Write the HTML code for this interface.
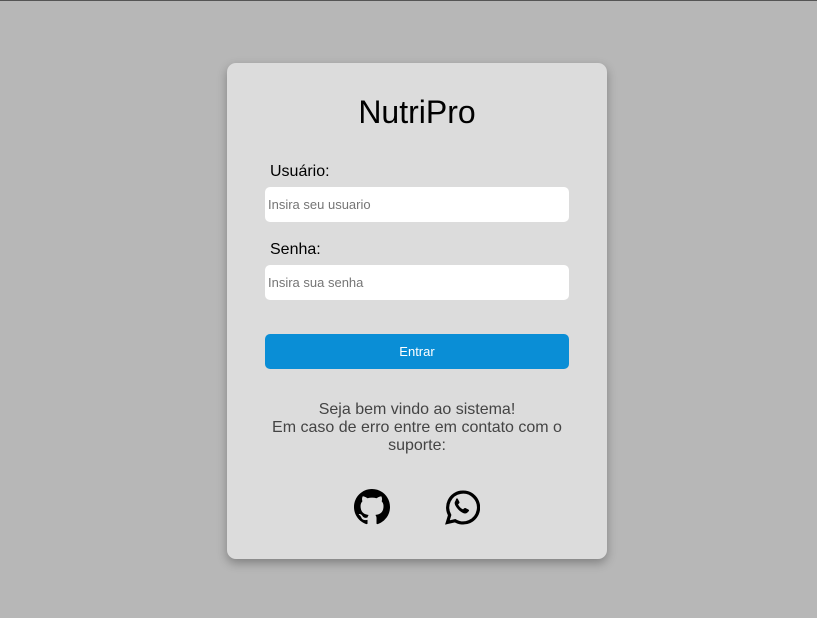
<!DOCTYPE html>
<html><head><style>
html,body{margin:0;padding:0;}
body{width:817px;height:618px;background:#b7b7b7;font-family:"Liberation Sans",Arial,sans-serif;position:relative;overflow:hidden;border-top:1px solid #555;box-sizing:border-box;}
.card{position:absolute;left:227px;top:62px;width:380px;height:496px;background:#dcdcdc;border-radius:9px;box-shadow:0 4px 10px rgba(0,0,0,.3);}
h1{position:absolute;left:0;right:0;top:29px;margin:0;text-align:center;font-weight:normal;font-size:32px;color:#000;line-height:40px;}
.lbl{position:absolute;left:43px;font-size:16px;color:#000;}
.inp{position:absolute;left:38px;width:304px;height:35px;background:#fff;border-radius:5px;font-size:13px;color:#757575;line-height:35px;padding-left:3px;box-sizing:border-box;}
.btn{position:absolute;left:38px;top:271px;width:304px;height:35px;background:#0a8ed6;border-radius:5px;color:#fff;font-size:13px;text-align:center;line-height:35px;}
.msg{position:absolute;left:38px;width:304px;top:338px;text-align:center;font-size:16px;line-height:18px;color:#444;}
svg{position:absolute;}
</style></head><body>
<div class="card">
<h1>NutriPro</h1>
<div class="lbl" style="top:100px">Usuário:</div>
<div class="inp" style="top:124px">Insira seu usuario</div>
<div class="lbl" style="top:178px">Senha:</div>
<div class="inp" style="top:202px">Insira sua senha</div>
<div class="btn">Entrar</div>
<div class="msg">Seja bem vindo ao sistema!<br>Em caso de erro entre em contato com o suporte:</div>
<svg style="left:127px;top:426px" width="36" height="36" viewBox="0 0 16 16"><path fill="#000" d="M8 0C3.58 0 0 3.58 0 8c0 3.54 2.290 6.53 5.47 7.59.4.07.55-.17.55-.38 0-.19-.01-.82-.01-1.49-2.01.37-2.53-.49-2.69-.94-.09-.23-.48-.94-.82-1.130-.28-.15-.68-.52-.01-.53.63-.01 1.080.58 1.230.82.72 1.21 1.870.87 2.330.66.07-.52.28-.87.51-1.07-1.78-.2-3.64-.89-3.64-3.95 0-.87.31-1.59.82-2.15-.08-.2-.36-1.02.08-2.12 0 0 .67-.21 2.2.82.64-.18 1.32-.27 2-.27.68 0 1.36.09 2 .27 1.53-1.04 2.2-.82 2.2-.82.44 1.1.16 1.92.08 2.12.51.56.82 1.27.82 2.15 0 3.07-1.87 3.75-3.65 3.95.29.25.54.73.54 1.48 0 1.07-.01 1.93-.01 2.2 0 .21.15.46.55.38A8.013 8.013 0 0016 8c0-4.42-3.58-8-8-8z"/></svg>
<svg style="left:217px;top:426px" width="36" height="36" viewBox="1.5 1.5 21 21"><path fill="none" stroke="#000" stroke-width="1.9" d="M3.5 21l1.3-4.3A9 9 0 1 1 8 20z"/><path fill="#000" d="M8.6 7.2c.3-.3.8-.3 1 .1l.9 1.8c.1.3 0 .6-.2.8l-.6.6c.6 1.3 1.6 2.3 2.9 2.9l.6-.6c.2-.2.5-.3.8-.2l1.8.9c.4.2.4.7.1 1l-.8.8c-.6.6-1.6.6-2.5.2-2-1-3.6-2.6-4.6-4.6-.4-.9-.4-1.9.2-2.5z"/></svg>
</div>
</body></html>
